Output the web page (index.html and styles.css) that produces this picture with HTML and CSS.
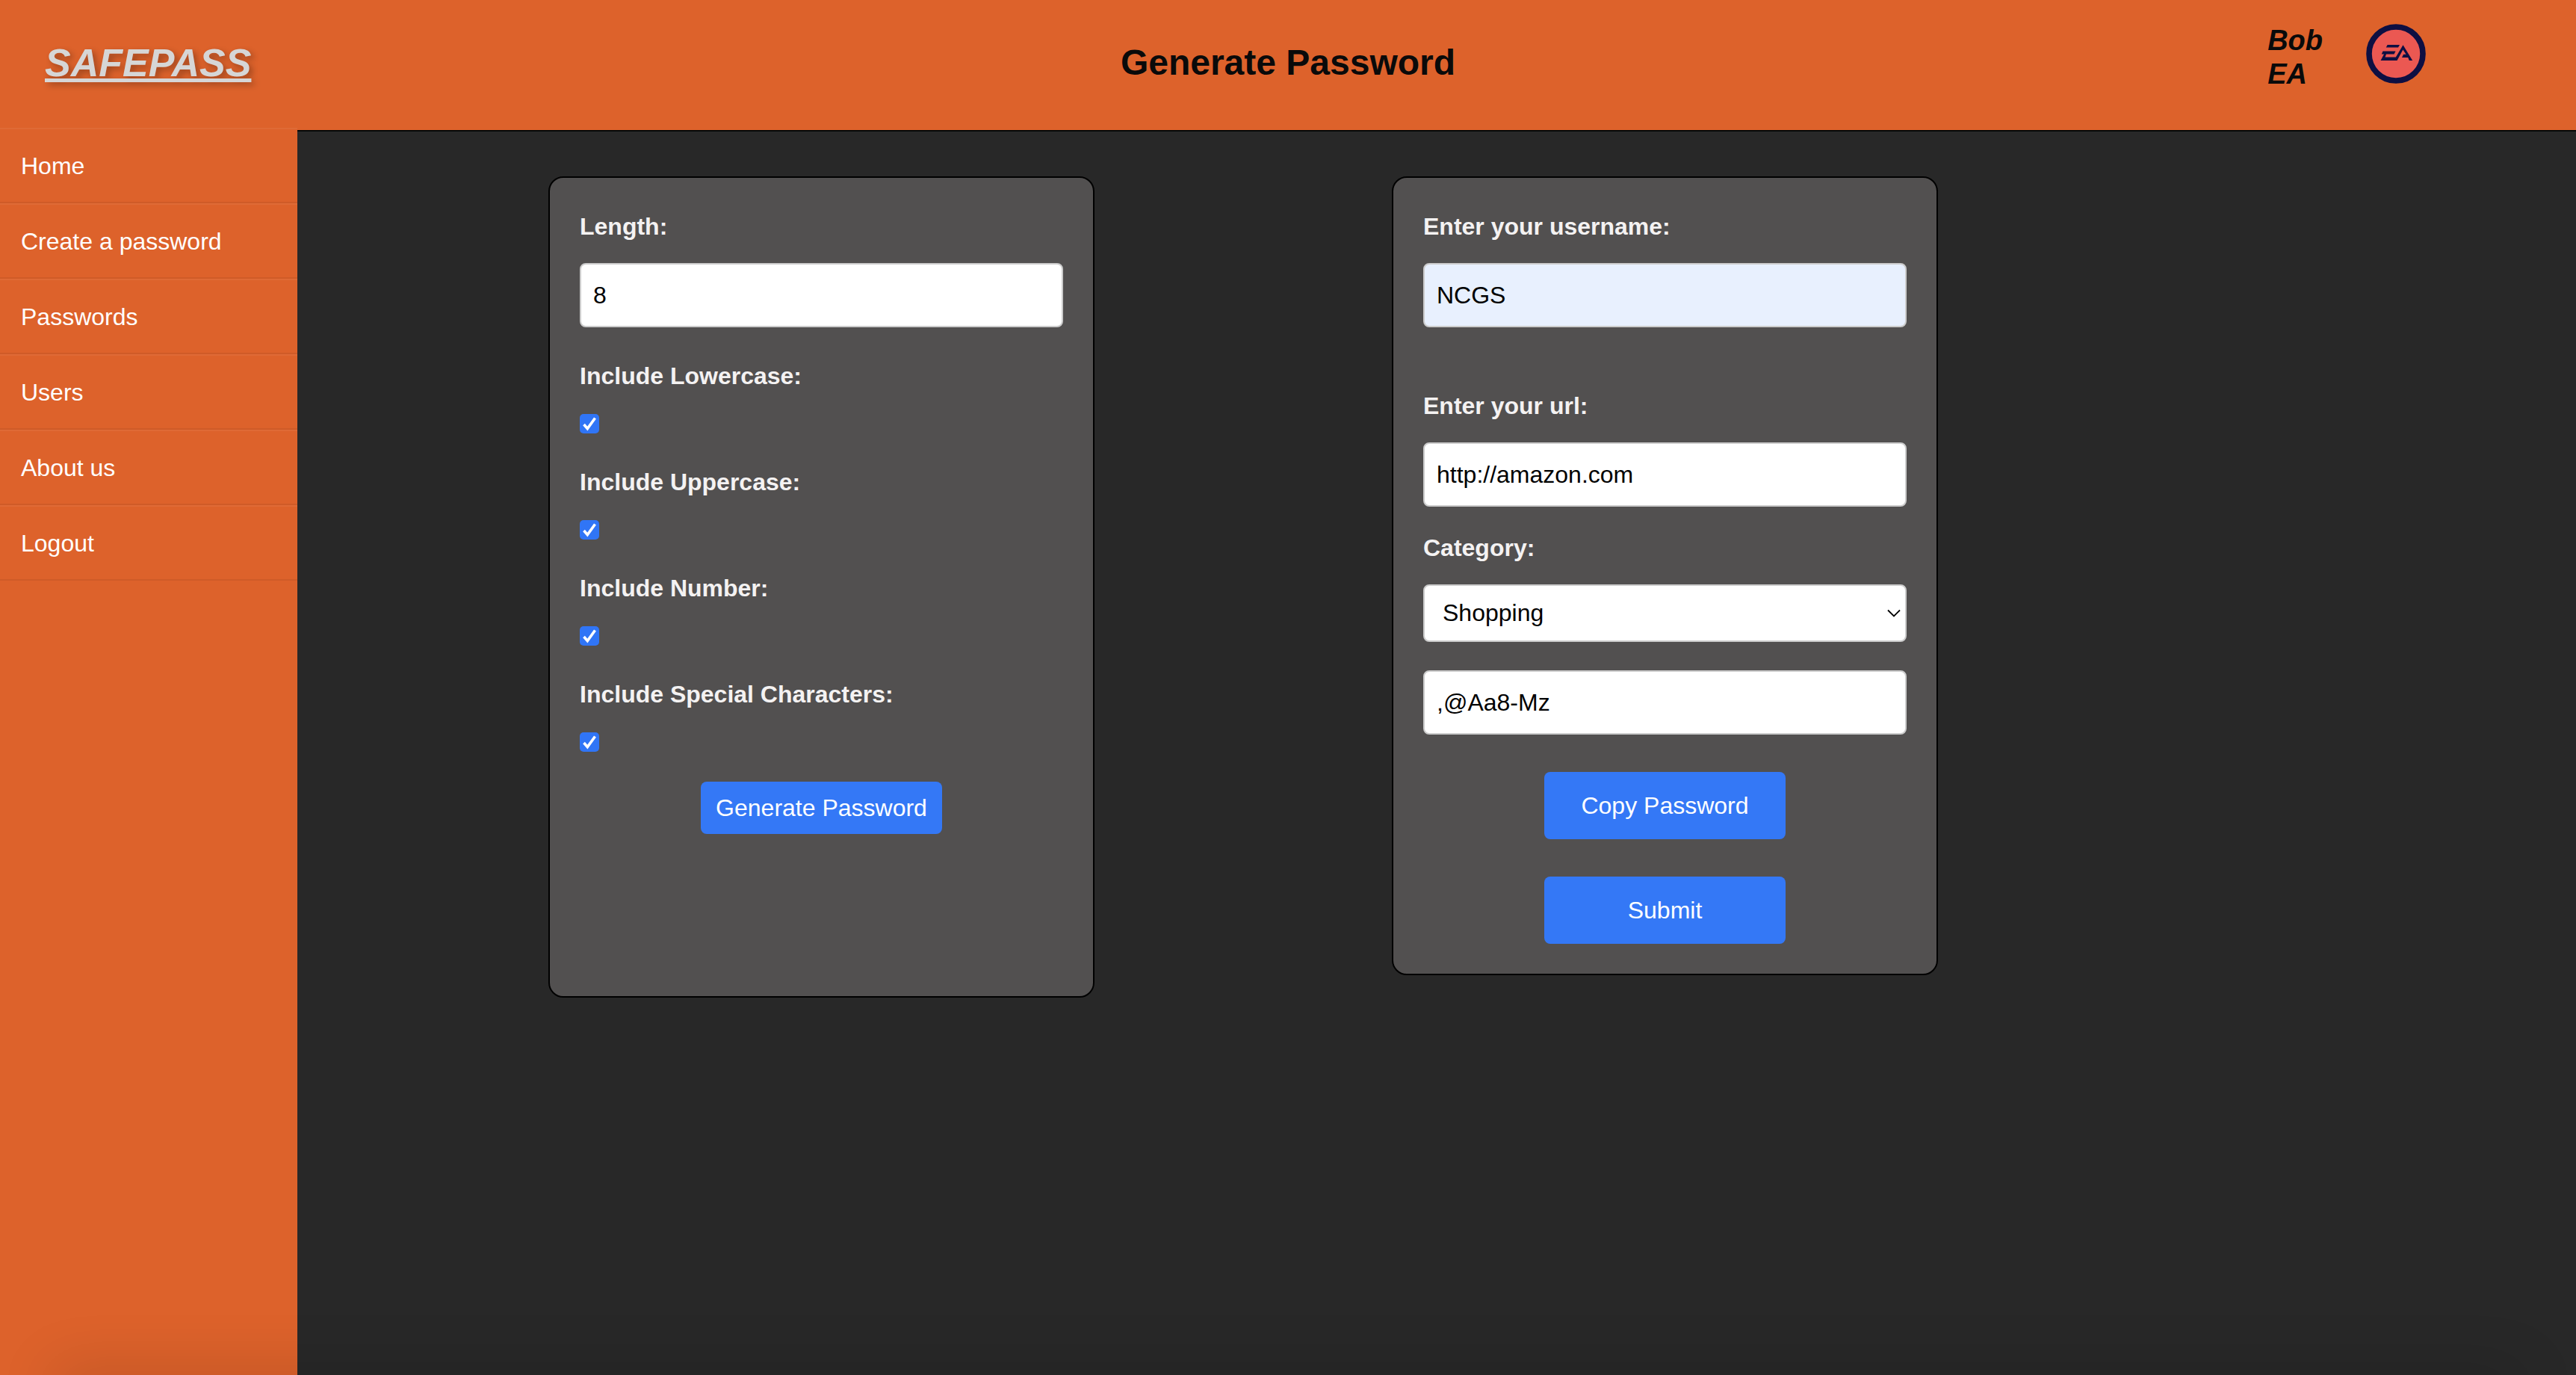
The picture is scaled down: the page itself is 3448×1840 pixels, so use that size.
FILE: index.html
```html
<!DOCTYPE html>
<html lang="en">
<head>
<meta charset="utf-8">
<meta name="viewport" content="width=device-width, initial-scale=1">
<title>SafePass - Generate Password</title>
<link rel="stylesheet" href="styles.css">
</head>
<body>
<header class="topbar">
  <a class="brand" href="#">SAFEPASS</a>
  <h1 class="title">Generate Password</h1>
  <div class="user">
    <p class="user-name">Bob<br>EA</p>
    <svg class="user-logo" viewBox="0 0 80 80" role="img" aria-label="EA">
      <circle cx="40" cy="40" r="36" fill="#eb5852" stroke="#0e0f42" stroke-width="7.6"/>
      <path fill="#0e0f42" d="M28.6 28H45L43 31.6H26.8ZM22.5 36.5H39.5L37.5 40.5H27L25.5 44.5H39.8L49.5 28.2L62.2 49H57.8L56.2 45H48L50 40.8H53.5L49.4 34.5L41.5 49H19.5L24 40.5H20.8Z"/>
    </svg>
  </div>
</header>
<div class="layout">
  <nav class="sidebar">
    <a class="nav-link" href="#">Home</a>
    <a class="nav-link" href="#">Create a password</a>
    <a class="nav-link" href="#">Passwords</a>
    <a class="nav-link" href="#">Users</a>
    <a class="nav-link" href="#">About us</a>
    <a class="nav-link" href="#">Logout</a>
  </nav>
  <main class="content">
    <form class="card card-options">
      <div class="field">
        <label class="label" for="length">Length:</label>
        <input class="input" id="length" type="text" inputmode="numeric" value="8">
      </div>
      <div class="field">
        <label class="label" for="lower">Include Lowercase:</label>
        <input class="check" id="lower" type="checkbox" checked>
      </div>
      <div class="field">
        <label class="label" for="upper">Include Uppercase:</label>
        <input class="check" id="upper" type="checkbox" checked>
      </div>
      <div class="field">
        <label class="label" for="number">Include Number:</label>
        <input class="check" id="number" type="checkbox" checked>
      </div>
      <div class="field">
        <label class="label" for="special">Include Special Characters:</label>
        <input class="check" id="special" type="checkbox" checked>
      </div>
      <button class="button button-compact" type="button">Generate Password</button>
    </form>
    <form class="card card-entry">
      <div class="field field-spaced">
        <label class="label" for="username">Enter your username:</label>
        <input class="input input-autofilled" id="username" type="text" value="NCGS">
      </div>
      <div class="field field-tight">
        <label class="label" for="url">Enter your url:</label>
        <input class="input" id="url" type="text" value="http://amazon.com">
      </div>
      <div class="field">
        <label class="label" for="category">Category:</label>
        <div class="select-wrap">
          <select class="select" id="category"><option>Shopping</option></select>
          <svg class="chevron" viewBox="0 0 18 12" aria-hidden="true"><path d="M1 1.5L9 9.5L17 1.5" fill="none" stroke="#000" stroke-width="1.8"/></svg>
        </div>
      </div>
      <input class="input" type="text" aria-label="Generated password" value=",@Aa8-Mz">
      <div class="actions">
        <button class="button" type="button">Copy Password</button>
        <button class="button" type="submit">Submit</button>
      </div>
    </form>
  </main>
</div>
</body>
</html>
```
FILE: styles.css
```css
* {
  box-sizing: border-box;
}

body {
  margin: 0;
  min-height: 100vh;
  display: flex;
  flex-direction: column;
  background: #282828;
  color: #0a0a0a;
  font-family: "Liberation Sans", Arial, Helvetica, sans-serif;
  font-size: 32px;
  line-height: 37px;
}

/* Soft shade along the bottom edge of the window */
body::after {
  content: "";
  position: fixed;
  left: 80px;
  right: 80px;
  bottom: -40px;
  height: 40px;
  box-shadow: 0 0 80px 8px rgba(0, 0, 0, 0.14);
  pointer-events: none;
}

.topbar {
  display: grid;
  grid-template-columns: 1fr auto 1fr;
  align-items: center;
  height: 176px;
  padding-bottom: 6px;
  background: #dd622b;
  border-bottom: 2px solid #050808;
}

.brand {
  justify-self: start;
  margin-left: 60px;
  color: #d6d6d6;
  font-size: 52px;
  line-height: 60px;
  font-weight: bold;
  font-style: italic;
  text-decoration: underline;
  text-decoration-thickness: 5px;
  text-shadow: 4px 4px 8px rgba(0, 0, 0, 0.3);
}

.title {
  margin: 0;
  font-size: 48px;
  line-height: 56px;
}

.user {
  display: flex;
  align-self: start;
  justify-self: end;
  gap: 58px;
  margin: 32px 201px 0 0;
}

.user-name {
  margin: 0;
  font-size: 38px;
  line-height: 45px;
  font-weight: bold;
  font-style: italic;
}

.user-logo {
  width: 80px;
  height: 80px;
}

.layout {
  flex: 1;
  display: flex;
}

.sidebar {
  flex: none;
  width: 398px;
  margin-top: -5px;
  background: #dd622b;
}

.nav-link {
  display: block;
  padding: 31px 28px 29px;
  border-top: 2px solid rgba(255, 255, 255, 0.05);
  border-bottom: 2px solid rgba(0, 0, 0, 0.06);
  color: #fff;
  text-decoration: none;
}

.content {
  flex: 1;
  display: grid;
  grid-template-columns: 336fr 731fr 398fr 731fr 854fr;
  align-items: start;
  padding: 60px 0;
}

.card {
  display: flex;
  flex-direction: column;
  padding: 40px;
  background: #525050;
  border: 2px solid #000;
  border-radius: 20px;
}

.card-options {
  grid-column: 2;
  gap: 40px;
  min-height: 1099px;
}

.card-entry {
  grid-column: 4;
}

.field {
  display: flex;
  flex-direction: column;
}

.card-entry .field {
  margin-bottom: 38px;
}

.card-entry .field-spaced {
  margin-bottom: 80px;
}

.card-entry .field-tight {
  margin-bottom: 30px;
}

.label {
  margin-bottom: 23px;
  color: #f4f2f2;
  font-weight: bold;
  line-height: 51px;
}

.input,
.select {
  width: 100%;
  margin: 0;
  border: 2px solid #ccc;
  border-radius: 8px;
  background: #fff;
  color: #000;
  font: inherit;
}

.input {
  height: 86px;
  padding: 0 16px;
}

.input-autofilled {
  background: #e8f0fe;
}

.select-wrap {
  position: relative;
}

.select {
  display: block;
  height: 77px;
  padding: 0 24px;
  appearance: none;
}

.chevron {
  position: absolute;
  right: 8px;
  top: 33px;
  width: 18px;
  height: 12px;
  pointer-events: none;
}

.check {
  appearance: none;
  width: 26px;
  height: 26px;
  margin: 2px 0 0;
  border-radius: 5px;
  background: #3075f6 url("data:image/svg+xml,%3Csvg xmlns='http://www.w3.org/2000/svg' viewBox='0 0 26 26'%3E%3Cpath d='M5.5 14L10.3 19.5L20.5 5.5' fill='none' stroke='%23fff' stroke-width='3.6'/%3E%3C/svg%3E") center / 26px 26px no-repeat;
}

.actions {
  display: flex;
  flex-direction: column;
  gap: 50px;
  margin-top: 50px;
}

.button {
  align-self: center;
  width: 50%;
  height: 90px;
  padding: 0;
  border: 0;
  border-radius: 8px;
  background: #3478f6;
  color: #fff;
  font: inherit;
  white-space: nowrap;
}

.button-compact {
  height: 70px;
}
```
